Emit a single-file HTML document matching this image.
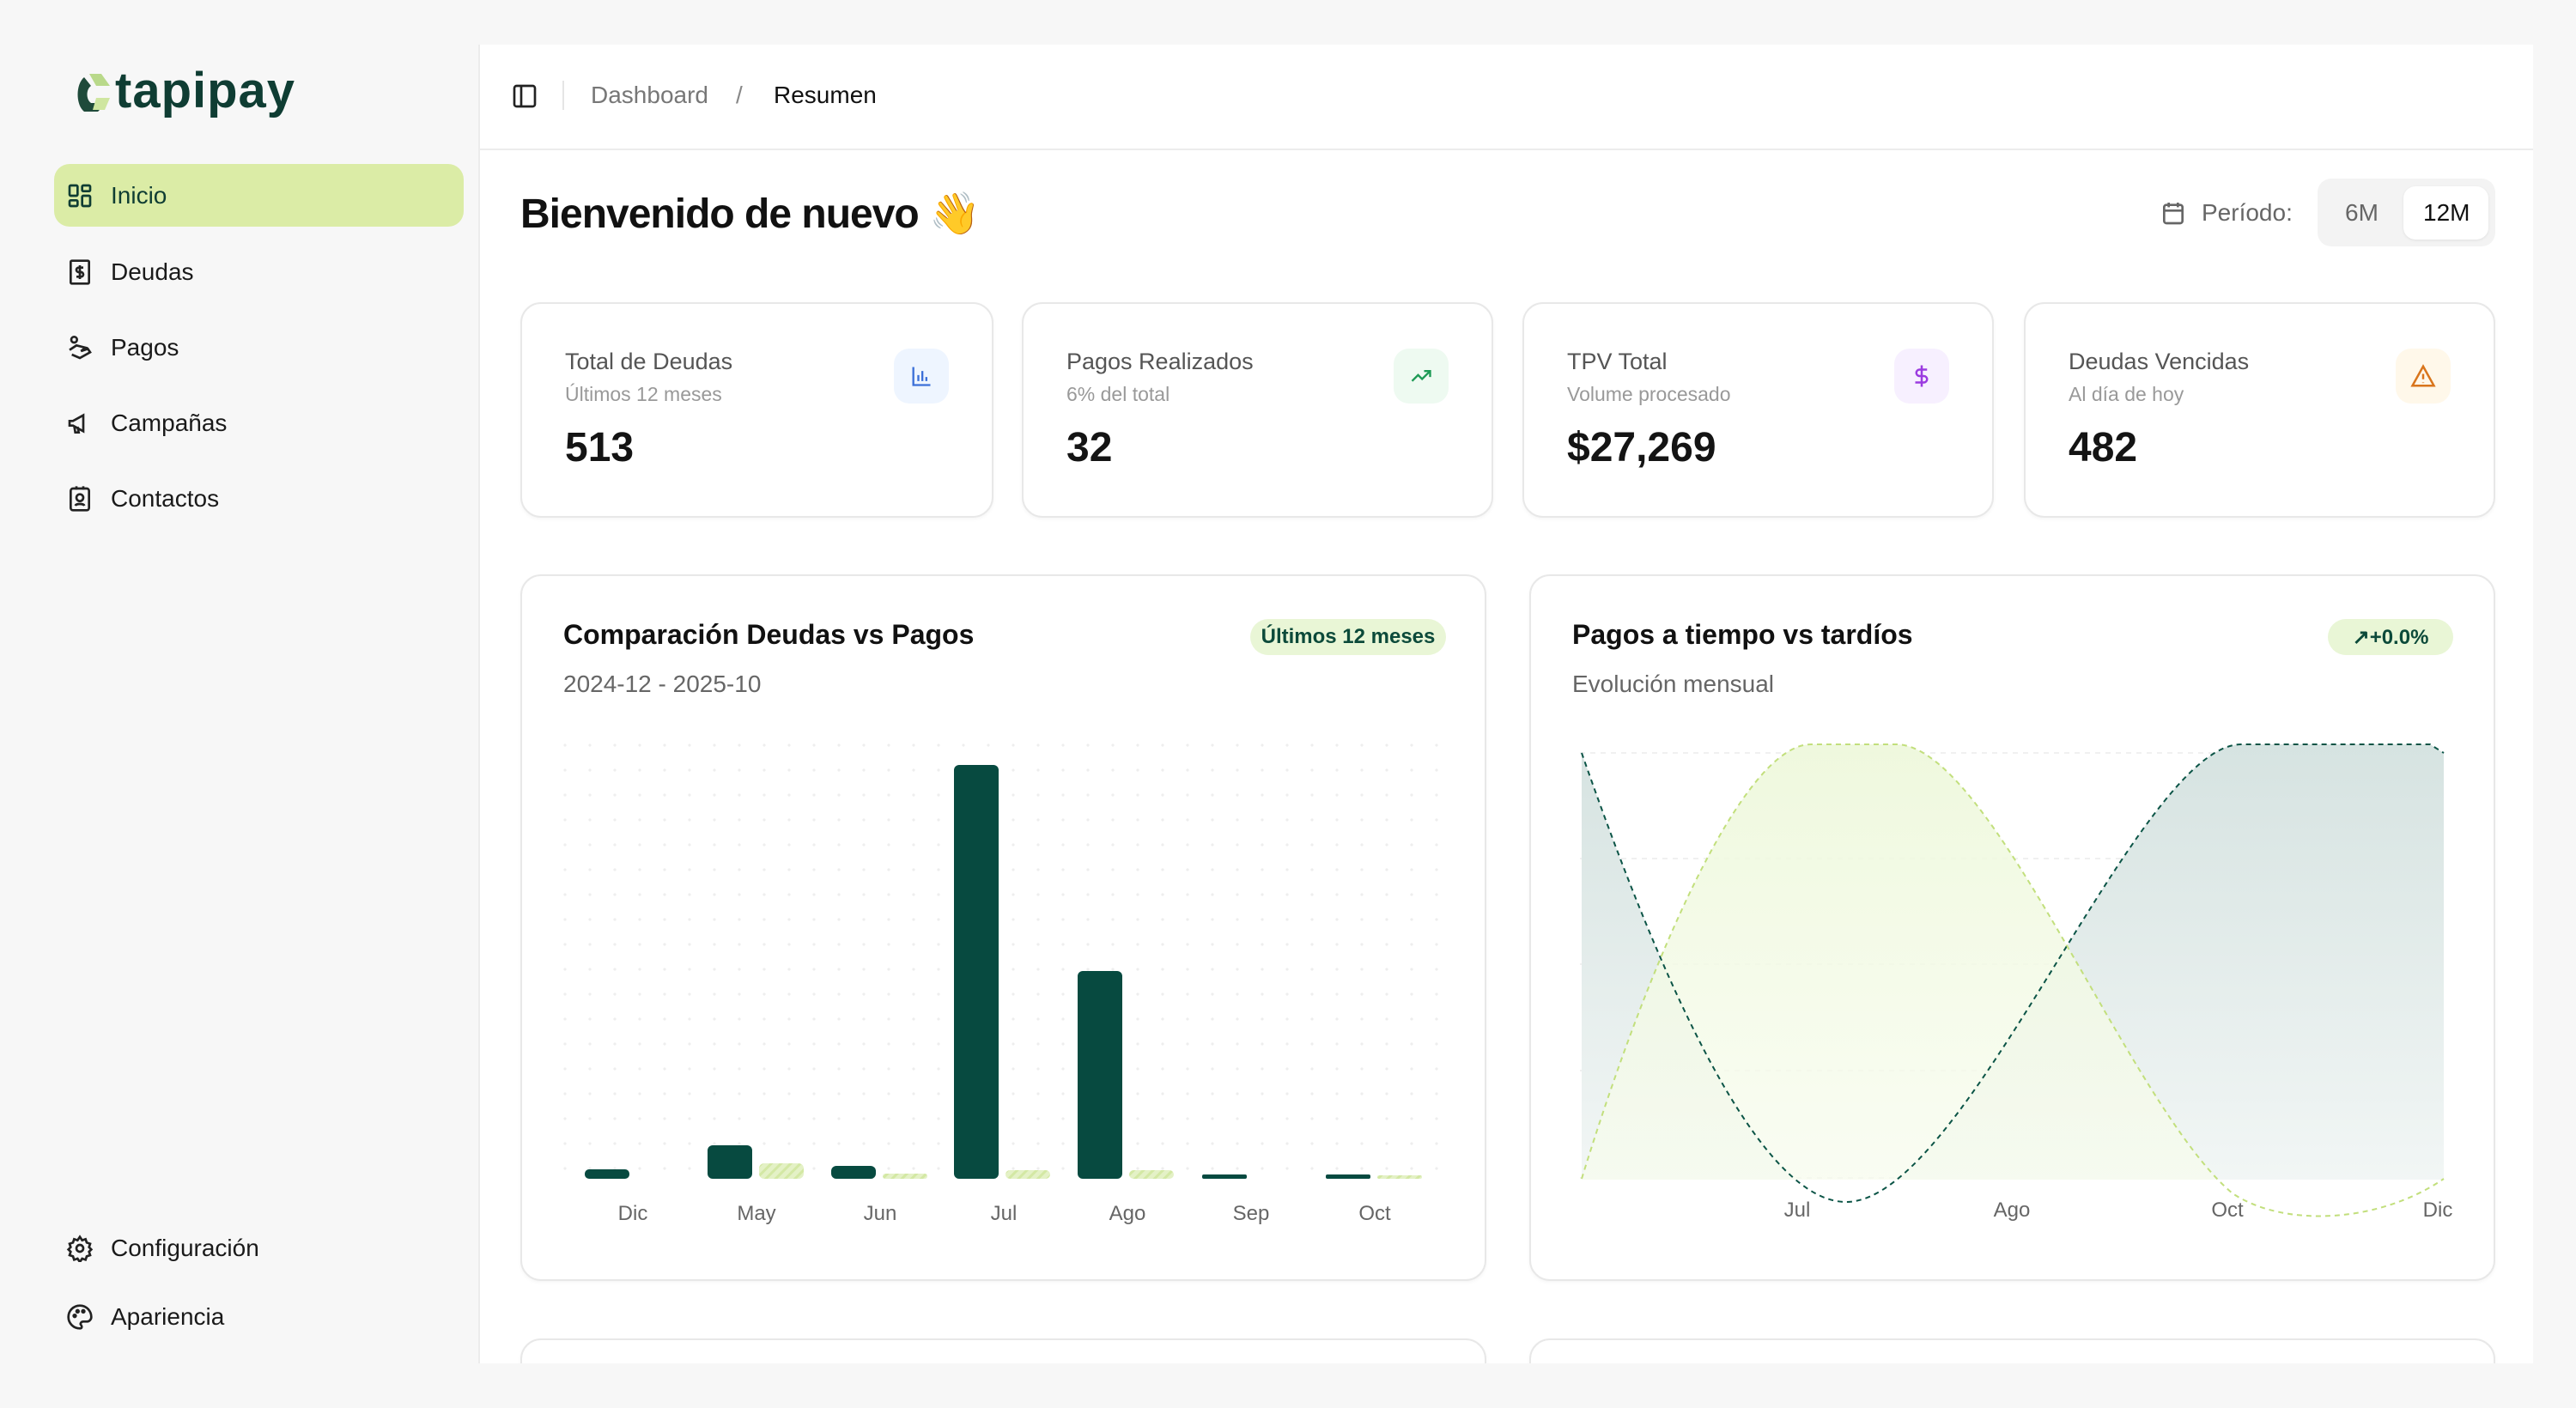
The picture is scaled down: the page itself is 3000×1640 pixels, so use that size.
<!DOCTYPE html>
<html style="width:3000px;height:1640px;overflow:hidden"><head><meta charset="utf-8"><style>
*{box-sizing:border-box;margin:0;padding:0}
body{width:3000px;height:1640px;background:#f7f7f7;font-family:"Liberation Sans",sans-serif;color:#111;position:relative;overflow:hidden}
.a{position:absolute}
.nav{position:absolute;left:63px;width:477px;height:73px;border-radius:18px;display:flex;align-items:center;font-size:28px;color:#1a1a1a}
.nav svg{margin-left:14px;margin-right:20px}
.card{position:absolute;background:#fff;border:2px solid #e8e8e8;border-radius:24px;box-shadow:0 2px 4px rgba(0,0,0,.04)}
.st{position:absolute;left:50px;top:52px;font-size:27px;color:#555}
.ss{position:absolute;left:50px;top:92px;font-size:23px;color:#999}
.sv{position:absolute;left:50px;top:140px;font-size:48px;font-weight:bold;color:#141414}
.ib{position:absolute;right:50px;top:52px;width:64px;height:64px;border-radius:18px;display:flex;align-items:center;justify-content:center}
.ct{position:absolute;left:48px;top:50px;font-size:32px;font-weight:bold;color:#111}
.cs{position:absolute;left:48px;top:110px;font-size:28px;color:#666}
.badge{position:absolute;top:50px;height:42px;border-radius:21px;background:#e9f6d6;color:#0c4a3a;font-size:24px;font-weight:bold;display:flex;align-items:center;justify-content:center}
.xl{position:absolute;font-size:24px;color:#666;transform:translateX(-50%)}
</style></head><body>
<div class="a" style="left:557px;top:52px;width:2393px;height:1536px;background:#fff;border-left:2px solid #ececec"></div>
<div class="a" style="left:557px;top:173px;width:2393px;height:2px;background:#ececec"></div>

<!-- logo -->
<svg class="a" style="left:84px;top:80px" width="50" height="60" viewBox="0 0 50 60"><path d="M20 6 L34 6 L44 20 L28 20 Z" fill="#b9d98a"/><path d="M14 10 C4 18 4 42 14 50 L30 50 L40 40 L22 40 C16 36 16 24 22 20 Z" fill="#1f4a3a"/><path d="M28 34 L44 34 L38 48 L24 48 Z" fill="#cfe6a0"/></svg>
<div class="a" style="left:134px;top:72px;font-size:58px;color:#0f3d33;font-weight:bold;letter-spacing:1px">tapipay</div>

<!-- nav -->
<div class="nav" style="top:191px;background:#dbeca6;color:#0f3d33"><svg width="32" height="32" viewBox="0 0 24 24" fill="none" stroke="#0f3d33" stroke-width="2"><rect x="3" y="3" width="7" height="9" rx="1"/><rect x="14" y="3" width="7" height="5" rx="1"/><rect x="14" y="12" width="7" height="9" rx="1"/><rect x="3" y="16" width="7" height="5" rx="1"/></svg>Inicio</div>
<div class="nav" style="top:280px"><svg width="32" height="32" viewBox="0 0 24 24" fill="none" stroke="#222" stroke-width="2"><rect x="4" y="2" width="16" height="20" rx="1"/><path d="M15 8h-4a2 2 0 0 0 0 4h2a2 2 0 0 1 0 4H9M12 6v12"/></svg>Deudas</div>
<div class="nav" style="top:368px"><svg width="32" height="32" viewBox="0 0 24 24" fill="none" stroke="#222" stroke-width="2"><circle cx="7" cy="5" r="2.5"/><path d="M3 14l6-4 8 2-4 3 6-2 2 3-9 5-7-3"/></svg>Pagos</div>
<div class="nav" style="top:456px"><svg width="32" height="32" viewBox="0 0 24 24" fill="none" stroke="#222" stroke-width="2"><path d="M3 10v4h3l9 5V5L6 10z M7 14l1 6h3l-1-5"/></svg>Campañas</div>
<div class="nav" style="top:544px"><svg width="32" height="32" viewBox="0 0 24 24" fill="none" stroke="#222" stroke-width="2"><rect x="4" y="3" width="16" height="19" rx="2"/><circle cx="12" cy="11" r="3"/><path d="M8 18c1-2 7-2 8 0M9 1v3M15 1v3"/></svg>Contactos</div>
<div class="nav" style="top:1417px"><svg width="32" height="32" viewBox="0 0 24 24" fill="none" stroke="#222" stroke-width="2"><circle cx="12" cy="12" r="3"/><path d="M12 2l2 3 3-1 1 3 3 1-1 3 2 2-2 2 1 3-3 1-1 3-3-1-2 3-2-3-3 1-1-3-3-1 1-3-2-2 2-2-1-3 3-1 1-3 3 1z"/></svg>Configuración</div>
<div class="nav" style="top:1497px"><svg width="32" height="32" viewBox="0 0 24 24" fill="none" stroke="#222" stroke-width="2"><path d="M12 2a10 10 0 1 0 0 20c2 0 2-2 1-3s0-3 2-3h3a4 4 0 0 0 4-4c0-5-4-10-10-10z"/><circle cx="7.5" cy="11" r="1"/><circle cx="10" cy="7" r="1"/><circle cx="15" cy="7" r="1"/></svg>Apariencia</div>

<!-- header -->
<svg class="a" style="left:595px;top:96px" width="32" height="32" viewBox="0 0 24 24" fill="none" stroke="#222" stroke-width="2"><rect x="3" y="3" width="18" height="18" rx="2"/><path d="M9 3v18"/></svg>
<div class="a" style="left:655px;top:94px;width:2px;height:34px;background:#e5e5e5"></div>
<div class="a" style="left:688px;top:95px;font-size:28px;color:#777">Dashboard</div>
<div class="a" style="left:857px;top:95px;font-size:28px;color:#888">/</div>
<div class="a" style="left:901px;top:95px;font-size:28px;color:#111">Resumen</div>

<div class="a" style="left:606px;top:220px;font-size:48px;font-weight:bold;letter-spacing:-1px">Bienvenido de nuevo 👋</div>

<svg class="a" style="left:2515px;top:232px" width="32" height="32" viewBox="0 0 24 24" fill="none" stroke="#666" stroke-width="2"><rect x="4" y="5" width="16" height="16" rx="2"/><path d="M4 10h16M8 3v4M16 3v4"/></svg>
<div class="a" style="left:2564px;top:232px;font-size:28px;color:#666">Período:</div>
<div class="a" style="left:2699px;top:208px;width:207px;height:79px;border-radius:16px;background:#f3f3f3"></div>
<div class="a" style="left:2731px;top:232px;font-size:28px;color:#666">6M</div>
<div class="a" style="left:2799px;top:217px;width:99px;height:62px;border-radius:14px;background:#fff;box-shadow:0 1px 3px rgba(0,0,0,.08)"></div>
<div class="a" style="left:2822px;top:232px;font-size:28px;color:#111">12M</div>

<!-- stat cards -->
<div class="card" style="left:606px;top:352px;width:551px;height:251px"><div class="st">Total de Deudas</div><div class="ss">Últimos 12 meses</div><div class="sv">513</div><div class="ib" style="background:#eef5ff"><svg width="28" height="28" viewBox="0 0 24 24" fill="none" stroke="#3b6fd8" stroke-width="2"><path d="M4 3v18h17M9 17v-6M13 17V7M17 17v-4"/></svg></div></div>
<div class="card" style="left:1190px;top:352px;width:549px;height:251px"><div class="st">Pagos Realizados</div><div class="ss">6% del total</div><div class="sv">32</div><div class="ib" style="background:#eefaf1"><svg width="28" height="28" viewBox="0 0 24 24" fill="none" stroke="#1d9a55" stroke-width="2"><path d="M3 17l6-6 4 4 8-8M15 7h6v6"/></svg></div></div>
<div class="card" style="left:1773px;top:352px;width:549px;height:251px"><div class="st">TPV Total</div><div class="ss">Volume procesado</div><div class="sv">$27,269</div><div class="ib" style="background:#f7f0ff"><svg width="30" height="30" viewBox="0 0 24 24" fill="none" stroke="#9b3be0" stroke-width="2"><path d="M12 2v20M17 6H10a3 3 0 0 0 0 6h4a3 3 0 0 1 0 6H6"/></svg></div></div>
<div class="card" style="left:2357px;top:352px;width:549px;height:251px"><div class="st">Deudas Vencidas</div><div class="ss">Al día de hoy</div><div class="sv">482</div><div class="ib" style="background:#fff8ea"><svg width="30" height="30" viewBox="0 0 24 24" fill="none" stroke="#d9751c" stroke-width="2"><path d="M12 3L2 21h20zM12 10v5M12 18v.5"/></svg></div></div>

<!-- bar chart card -->
<div class="card" style="left:606px;top:669px;width:1125px;height:823px">
<div class="ct">Comparación Deudas vs Pagos</div><div class="cs">2024-12 - 2025-10</div>
<div class="badge" style="left:848px;width:228px">Últimos 12 meses</div>
</div>
<div class="card" style="left:1781px;top:669px;width:1125px;height:823px">
<div class="ct">Pagos a tiempo vs tardíos</div><div class="cs">Evolución mensual</div>
<div class="badge" style="left:928px;width:146px">↗+0.0%</div>
</div>
<svg class="a" style="left:0;top:0" width="3000" height="1640">
<defs>
<pattern id="dots" x="656" y="866" width="29" height="29" patternUnits="userSpaceOnUse"><circle cx="2" cy="2" r="1.6" fill="#eeeeee"/></pattern>
<pattern id="hatch" width="8" height="8" patternUnits="userSpaceOnUse" patternTransform="rotate(45)"><rect width="8" height="8" fill="#e4f1c6"/><rect width="3" height="8" fill="#d3e8a4"/></pattern>
<linearGradient id="gd" x1="0" y1="0" x2="0" y2="1"><stop offset="0" stop-color="#d6e3e1"/><stop offset="1" stop-color="#f3f7f6"/></linearGradient>
<linearGradient id="gl" x1="0" y1="0" x2="0" y2="1"><stop offset="0" stop-color="#eef8dc" stop-opacity=".95"/><stop offset="1" stop-color="#f8fcef" stop-opacity=".7"/></linearGradient>
<clipPath id="cl"><rect x="1840" y="866" width="1007" height="508"/></clipPath>
</defs>
<rect x="656" y="866" width="1026" height="506" fill="url(#dots)"/>
<g fill="#074a40">
<rect x="681" y="1362" width="52" height="11" rx="5"/>
<rect x="824" y="1334" width="52" height="39" rx="6"/>
<rect x="968" y="1358" width="52" height="15" rx="6"/>
<rect x="1111" y="891" width="52" height="482" rx="6"/>
<rect x="1255" y="1131" width="52" height="242" rx="6"/>
<rect x="1400" y="1368" width="52" height="5" rx="2"/>
<rect x="1544" y="1368" width="52" height="5" rx="2"/>
</g>
<g fill="url(#hatch)">
<rect x="884" y="1355" width="52" height="18" rx="6"/>
<rect x="1028" y="1367" width="52" height="6" rx="3"/>
<rect x="1171" y="1363" width="52" height="10" rx="5"/>
<rect x="1315" y="1363" width="52" height="10" rx="5"/>
<rect x="1604" y="1369" width="52" height="4" rx="2"/>
</g>
<g stroke="#f0f0f0" stroke-width="2" stroke-dasharray="6 6"><path d="M1840 877H2846M1840 1000H2846M1840 1123H2846M1840 1247H2846M1840 1372H2846"/></g>
<g clip-path="url(#cl)">
<path d="M1842 877 C1920 1100 2040 1400 2150 1400 C2290 1400 2490 867 2610 867 L2830 867 L2846 877 L2846 1374 L1842 1374Z" fill="url(#gd)"/>
<path d="M1842 1373 C1920 1120 2030 867 2109 867 L2208 867 C2320 867 2480 1290 2600 1390 C2660 1430 2770 1425 2846 1373 L2846 1374 L1842 1374Z" fill="url(#gl)"/>
</g>
<path d="M1842 877 C1920 1100 2040 1400 2150 1400 C2290 1400 2490 867 2610 867 L2830 867 L2846 877" fill="none" stroke="#0b5446" stroke-width="2" stroke-dasharray="6 5"/>
<path d="M1842 1373 C1920 1120 2030 867 2109 867 L2208 867 C2320 867 2480 1290 2600 1390 C2660 1430 2770 1425 2846 1373" fill="none" stroke="#c2df7c" stroke-width="2" stroke-dasharray="6 5"/>
</svg>
<div class="xl" style="left:737px;top:1400px">Dic</div>
<div class="xl" style="left:881px;top:1400px">May</div>
<div class="xl" style="left:1025px;top:1400px">Jun</div>
<div class="xl" style="left:1169px;top:1400px">Jul</div>
<div class="xl" style="left:1313px;top:1400px">Ago</div>
<div class="xl" style="left:1457px;top:1400px">Sep</div>
<div class="xl" style="left:1601px;top:1400px">Oct</div>
<div class="xl" style="left:2093px;top:1396px">Jul</div>
<div class="xl" style="left:2343px;top:1396px">Ago</div>
<div class="xl" style="left:2594px;top:1396px">Oct</div>
<div class="xl" style="left:2839px;top:1396px">Dic</div>

<!-- bottom cards -->
<div class="card" style="left:606px;top:1559px;width:1125px;height:60px"></div>
<div class="card" style="left:1781px;top:1559px;width:1125px;height:60px"></div>
<div class="a" style="left:0;top:1588px;width:3000px;height:52px;background:#f7f7f7"></div>
<div class="a" style="left:2950px;top:0;width:50px;height:1640px;background:#f7f7f7"></div>
</body></html>
